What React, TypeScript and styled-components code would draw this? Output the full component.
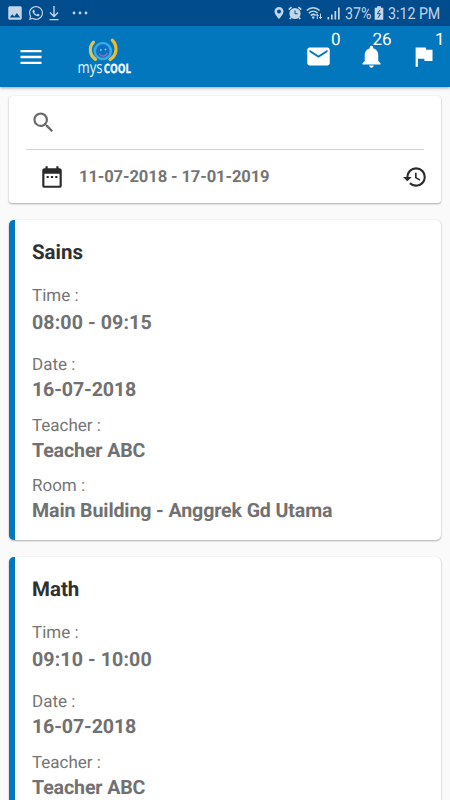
import React from "react";
import styled, { createGlobalStyle } from "styled-components";
import { MdMenu, MdMail, MdNotifications, MdFlag, MdSearch, MdDateRange, MdHistory, MdImage } from "react-icons/md";
import { FaWhatsapp } from "react-icons/fa";

const Global = createGlobalStyle`
  * { box-sizing: border-box; }
  body { margin: 0; background: #fafafa; font-family: Roboto, sans-serif; overflow: hidden; text-rendering: geometricPrecision; }
  svg { display: block; flex: none; }
`;

const Screen = styled.div`
  width: 450px;
  height: 800px;
  overflow: hidden;
  background: #fafafa;
`;

const StatusBar = styled.div`
  height: 26px;
  background: #014c8c;
  color: #c3d5e6;
  display: flex;
  align-items: center;
  justify-content: space-between;
  padding: 0 8px 0 6px;
`;

const StatusGroup = styled.div<{ $gap: number }>`
  display: flex;
  align-items: center;
  gap: ${(p) => p.$gap}px;
`;

const MoreSlot = styled.div`
  margin-left: 8px;
`;

const StatusText = styled.span<{ $width: number }>`
  width: ${(p) => p.$width}px;
  font-size: 16.5px;
  line-height: 26px;
  white-space: nowrap;
  padding-top: 3px;
  transform: scaleX(0.86);
  transform-origin: 0 50%;
`;

const AppBar = styled.header`
  height: 61px;
  background: #0277bd;
  display: flex;
  align-items: center;
  padding: 0 13px 0 17px;
  color: #fff;
  box-shadow: 0 1px 3px rgba(0, 0, 0, 0.35);
  position: relative;
`;

const Brand = styled.div`
  margin: 2px 0 0 29px;
  flex: 1;
`;

const Actions = styled.div`
  display: flex;
  gap: 25.5px;
`;

const Action = styled.div`
  position: relative;
  width: 27px;
  height: 27px;
`;

const Count = styled.span<{ $left: number }>`
  position: absolute;
  left: ${(p) => p.$left}px;
  top: -13px;
  font-size: 17px;
  line-height: 20px;
`;

const Content = styled.main`
  padding: 9px 9px 0;
  display: flex;
  flex-direction: column;
  gap: 17px;
`;

const Card = styled.section`
  background: #fff;
  border-radius: 3px;
  box-shadow: 0 1px 2px rgba(0, 0, 0, 0.3), 0 0 1px rgba(0, 0, 0, 0.15);
`;

const FilterCard = styled(Card)`
  height: 107px;
  padding: 0 17px;
`;

const SearchRow = styled.div`
  height: 54px;
  display: flex;
  align-items: center;
  padding-left: 4px;
  border-bottom: 1px solid #d4d4d4;
  color: #6b6b6b;
`;

const RangeRow = styled.div`
  height: 53px;
  display: flex;
  align-items: center;
  padding-left: 13px;
  margin-right: -4px;
  color: #2b2b2b;
`;

const RangeText = styled.span`
  flex: 1;
  margin-left: 14px;
  padding-top: 2px;
  font-size: 16.6px;
  letter-spacing: -0.12px;
  font-weight: 700;
  color: #757575;
`;

const LessonCard = styled(Card)`
  height: 320px;
  border-left: 6px solid #0277bd;
  border-radius: 5px;
  padding: 21px 17px 0;
  flex: none;
`;

const Title = styled.h2`
  margin: 0 0 19px;
  font-size: 20.5px;
  line-height: 24px;
  font-weight: 700;
  color: #303030;
`;

const Field = styled.div<{ $gap: number; $after: number }>`
  display: flex;
  flex-direction: column;
  gap: ${(p) => p.$gap}px;
  margin-bottom: ${(p) => p.$after}px;
`;

const Label = styled.span`
  font-size: 17px;
  line-height: 24px;
  color: #757575;
`;

const Value = styled.span<{ $tracking?: number }>`
  font-size: 19.6px;
  line-height: 24px;
  font-weight: 700;
  letter-spacing: ${(p) => p.$tracking ?? -0.12}px;
  color: #717171;
`;

function DownloadIcon() {
  return (
    <svg width="12" height="16" viewBox="0 0 12 16" fill="none" stroke="currentColor" strokeWidth="1.4">
      <path d="M6 1v10.5M2 7.5l4 4 4-4M1.5 14.6h9" />
    </svg>
  );
}

function MoreDots() {
  return (
    <svg width="16" height="4" viewBox="0 0 16 4" fill="currentColor">
      <circle cx="2" cy="2" r="1.4" />
      <circle cx="8" cy="2" r="1.4" />
      <circle cx="14" cy="2" r="1.4" />
    </svg>
  );
}

function PinIcon() {
  return (
    <svg width="10" height="14" viewBox="0 0 10 14" fill="currentColor" fillRule="evenodd">
      <path d="M5 1a4.5 4.5 0 0 0-4.5 4.5C.5 8.4 5 13 5 13s4.500-4.600 4.500-7.500A4.500 4.500 0 0 0 5 1zm0 2.600a2 2 0 1 1 0 4 2 2 0 0 1 0-4z" />
    </svg>
  );
}

function AlarmIcon() {
  return (
    <svg width="14" height="14" viewBox="0 0 14 14" fill="none" stroke="currentColor">
      <circle cx="7" cy="7.500" r="5.600" fill="currentColor" stroke="none" />
      <path d="M.8 3.600L3.600 1.200M13.200 3.600L10.400 1.200M3 11.500l-1.200 1.600M11 11.500l1.200 1.600" strokeWidth="1.700" />
      <path d="M7 4.400v3.400h2.600" stroke="#014c8c" strokeWidth="1" />
    </svg>
  );
}

function WifiIcon() {
  return (
    <svg width="17" height="14" viewBox="0 0 17 14" fill="none" stroke="currentColor">
      <path d="M.8 4.600c3.600-3.800 9.200-3.800 12.800 0M2.800 7.200c2.600-2.600 6.200-2.600 8.800 0M4.800 9.600c1.400-1.400 3.400-1.400 4.800-.2" strokeWidth="1.500" />
      <circle cx="7.200" cy="11.500" r="1.200" fill="currentColor" stroke="none" />
      <path d="M11.300 13V8.200M9.900 9.800l1.400-1.600 1.400 1.600M14.500 7.600v5M13.100 11l1.400 1.600 1.400-1.600" strokeWidth="1" />
    </svg>
  );
}

function SignalIcon() {
  return (
    <svg width="14" height="14" viewBox="0 0 14 14" fill="currentColor">
      <path d="M.5 11h1.700v2.500H.5zM4 8.500h1.700v5H4zM7.500 5h1.700v8.500H7.500zM11 1.500h1.700v12H11z" />
    </svg>
  );
}

function BatteryIcon() {
  return (
    <svg width="10" height="14" viewBox="0 0 10 14">
      <path d="M3 .3h4V1.800h2.300v12H.7v-12H3z" fill="currentColor" />
      <path d="M6 3.800L3.300 7.800h3.200L4 11.800" fill="none" stroke="#014c8c" strokeWidth="1" />
    </svg>
  );
}

function BrandLogo() {
  return (
    <svg width="60" height="42" viewBox="0 0 60 42" fontFamily="'Open Sans', sans-serif">
      <g fill="none" strokeLinecap="round">
        <path d="M19.500 5.200C14.700 10 15.500 18.300 21.500 22.300" stroke="#dfc25a" strokeWidth="3.200" />
        <path d="M38.300 3.200C44 9 43 18.500 36 22.500" stroke="#f2b92d" strokeWidth="3.200" />
        <circle cx="28.800" cy="14" r="8" fill="#0d6fc0" stroke="#36a9e4" strokeWidth="2.600" />
        <path d="M25.500 17c2 3 5.600 2.800 7.600-.6" stroke="#b9659c" strokeWidth="1.300" />
      </g>
      <circle cx="26.800" cy="13" r="1" fill="#63c4f0" />
      <circle cx="31.500" cy="12.600" r="1" fill="#63c4f0" />
      <text x="3.500" y="35.500" fontSize="16.500" fill="#e6f4fb" textLength="25" lengthAdjust="spacingAndGlyphs">mys</text>
      <text x="29.700" y="35.500" fontSize="12.800" fontWeight="700" fill="#fff" stroke="#fff" strokeWidth="0.300" textLength="27.300" lengthAdjust="spacingAndGlyphs">COOL</text>
    </svg>
  );
}

interface LessonData {
  subject: string;
  time: string;
  date: string;
  teacher: string;
  room: string;
}

const lessons: LessonData[] = [
  { subject: "Sains", time: "08:00 - 09:15", date: "16-07-2018", teacher: "Teacher ABC", room: "Main Building - Anggrek Gd Utama" },
  { subject: "Math", time: "09:10 - 10:00", date: "16-07-2018", teacher: "Teacher ABC", room: "Main Building - Anggrek Gd Utama" },
];

function Lesson({ data }: { data: LessonData }) {
  return (
    <LessonCard>
      <Title>{data.subject}</Title>
      <Field $gap={3} $after={18}><Label>Time :</Label><Value $tracking={0.1}>{data.time}</Value></Field>
      <Field $gap={1} $after={12}><Label>Date :</Label><Value>{data.date}</Value></Field>
      <Field $gap={1} $after={11}><Label>Teacher :</Label><Value>{data.teacher}</Value></Field>
      <Field $gap={1} $after={0}><Label>Room :</Label><Value>{data.room}</Value></Field>
    </LessonCard>
  );
}

export default function App() {
  return (
    <Screen>
      <Global />
      <StatusBar>
        <StatusGroup $gap={4}>
          <MdImage size={18} />
          <FaWhatsapp size={16} />
          <DownloadIcon />
          <MoreSlot><MoreDots /></MoreSlot>
        </StatusGroup>
        <StatusGroup $gap={4}>
          <PinIcon />
          <AlarmIcon />
          <WifiIcon />
          <SignalIcon />
          <StatusText $width={25}>37%</StatusText>
          <BatteryIcon />
          <StatusText $width={54}>3:12 PM</StatusText>
        </StatusGroup>
      </StatusBar>
      <AppBar>
        <MdMenu size={28} />
        <Brand><BrandLogo /></Brand>
        <Actions>
          <Action><MdMail size={27} /><Count $left={26}>0</Count></Action>
          <Action><MdNotifications size={27} /><Count $left={15}>26</Count></Action>
          <Action><MdFlag size={27} /><Count $left={25}>1</Count></Action>
        </Actions>
      </AppBar>
      <Content>
        <FilterCard>
          <SearchRow><MdSearch size={27} /></SearchRow>
          <RangeRow>
            <MdDateRange size={26} />
            <RangeText>11-07-2018 - 17-01-2019</RangeText>
            <MdHistory size={26} />
          </RangeRow>
        </FilterCard>
        {lessons.map((l) => <Lesson key={l.subject} data={l} />)}
      </Content>
    </Screen>
  );
}
